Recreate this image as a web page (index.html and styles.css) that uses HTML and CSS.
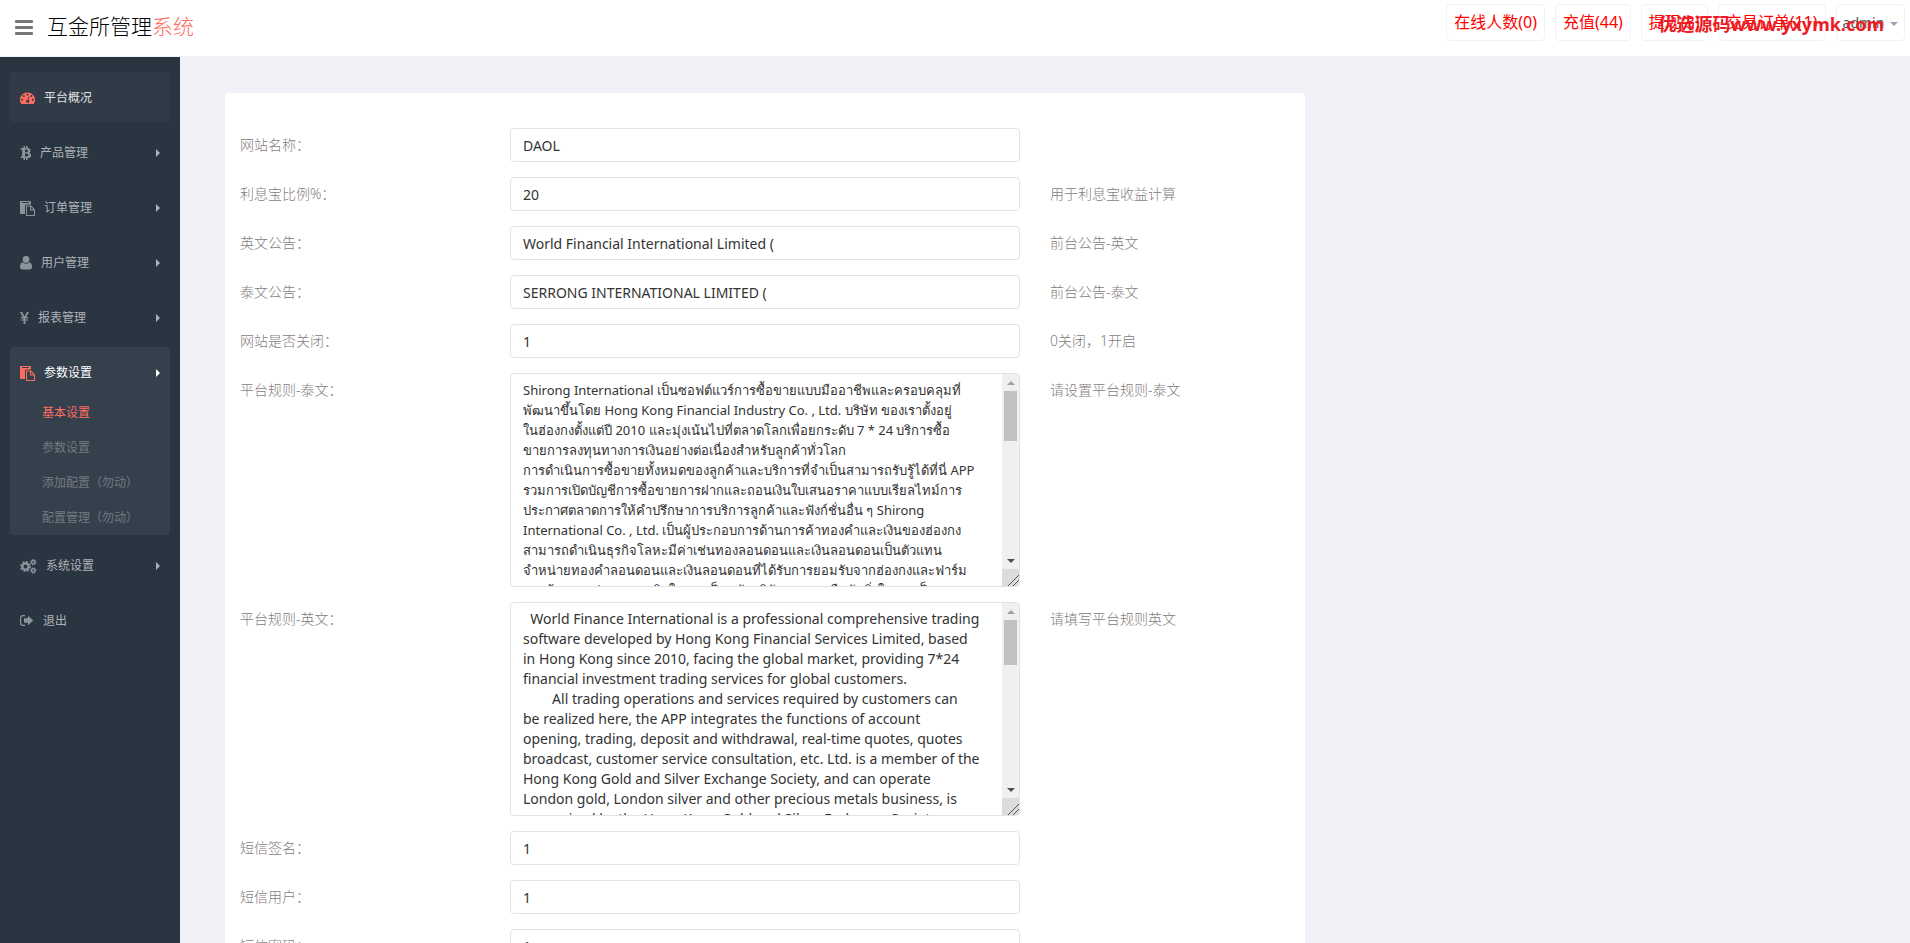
FILE: index.html
```html
<!DOCTYPE html>
<html lang="zh-CN">
<head>
<meta charset="UTF-8">
<meta name="viewport" content="width=device-width, initial-scale=1.0">
<title>互金所管理系统</title>
<link rel="stylesheet" href="styles.css">
</head>
<body>
<header class="header">
    <button class="toggle" type="button" aria-label="菜单"><span></span><span></span><span></span></button>
    <a class="logo" href="#">互金所管理<span>系统</span></a>
    <div class="top-nav">
        <a class="notice" href="#">在线人数(0)</a>
        <a class="notice" href="#">充值(44)</a>
        <a class="notice" href="#">提现(3)</a>
        <a class="notice" href="#">交易订单(11)</a>
        <a class="user" href="#">admin <b class="caret"></b></a>
        <span class="watermark">优选源码www.yxymk.com</span>
    </div>
</header>
<div class="container">
    <nav class="sidebar">
        <a class="item current" href="#">
            <svg width="15" height="14" viewBox="0 0 16 14"><path fill-rule="evenodd" d="M8 1a8 8 0 0 0-6.800 12.200q.2.300.6.300h12.400q.4 0 .6-.3A8 8 0 0 0 8 1zM8 2.100a1.100 1.100 0 1 1 0 2.200 1.100 1.100 0 0 1 0-2.200zM4 3.800a1.100 1.100 0 1 1 0 2.200 1.100 1.100 0 0 1 0-2.200zM12 3.800a1.100 1.100 0 1 1 0 2.200 1.100 1.100 0 0 1 0-2.200zM2.300 7.800a1.100 1.100 0 1 1 0 2.200 1.100 1.100 0 0 1 0-2.200zM13.700 7.800a1.100 1.100 0 1 1 0 2.200 1.100 1.100 0 0 1 0-2.200zM9.200 5.200l.8.200-.9 3.600a1.700 1.700 0 1 1-.8-.2z"/></svg>
            <span>平台概况</span>
        </a>
        <a class="item" href="#">
            <svg width="11" height="14" viewBox="0 0 10 14"><path fill-rule="evenodd" d="M3 0h1.500v2h1V0H7v2.100c2 .2 3 1.100 3 2.600 0 1-.5 1.700-1.400 2.100 1.300.4 2 1.200 2 2.500 0 1.800-1.200 2.700-3.600 2.800V14H5.500v-1.900h-1V14H3v-1.900H0l.3-1.600h.9q.4 0 .4-.4V4q0-.5-.7-.5H0V2h3zM4.500 3.500v2.700c2 .1 2.900-.3 2.900-1.300s-.9-1.500-2.900-1.400zM4.500 7.600v3c2.300.1 3.400-.4 3.400-1.500S6.800 7.500 4.500 7.600z"/></svg>
            <span>产品管理</span><i class="arrow"></i>
        </a>
        <a class="item" href="#">
            <svg width="15" height="15" viewBox="0 0 15 15"><path fill-rule="evenodd" d="M1 0h9q1 0 1 1v2.500H6.500Q5 3.500 5 5v8H1q-1 0-1-1V1Q0 0 1 0zM2 1v1h7V1z"/><path fill-rule="evenodd" d="M6 5q0-.5.5-.5H11L15 8.500v6q0 .5-.5.500h-8Q6 15 6 14.500zM7 5.500V14h7V9.500h-4v-4zM11 6v2.500h2.500z"/></svg>
            <span>订单管理</span><i class="arrow"></i>
        </a>
        <a class="item" href="#">
            <svg width="12" height="14" viewBox="0 0 12 14"><circle cx="6" cy="3.500" r="3.400"/><path d="M2.800 6.200Q0 6.500 0 11.200 0 13.500 2.300 13.500h7.400q2.300 0 2.300-2.300 0-4.700-2.800-5Q7.800 7.700 6 7.700T2.800 6.200z"/></svg>
            <span>用户管理</span><i class="arrow"></i>
        </a>
        <a class="item" href="#">
            <svg width="9" height="14" viewBox="0 0 9 14"><path d="M0 1h2.200l2.300 4.600L6.800 1H9L6.300 6h1.900v1.200H5.500v1.200h2.700v1.200H5.500V13h-2V9.600H.8V8.400h2.700V7.200H.8V6h1.900z"/></svg>
            <span>报表管理</span><i class="arrow"></i>
        </a>
        <div class="group">
            <a class="item active" href="#">
                <svg width="15" height="15" viewBox="0 0 15 15"><path fill-rule="evenodd" d="M1 0h9q1 0 1 1v2.500H6.500Q5 3.500 5 5v8H1q-1 0-1-1V1Q0 0 1 0zM2 1v1h7V1z"/><path fill-rule="evenodd" d="M6 5q0-.5.5-.5H11L15 8.500v6q0 .5-.5.500h-8Q6 15 6 14.500zM7 5.500V14h7V9.500h-4v-4zM11 6v2.500h2.500z"/></svg>
                <span>参数设置</span><i class="arrow"></i>
            </a>
            <div class="subs">
                <a class="on" href="#">基本设置</a>
                <a href="#">参数设置</a>
                <a href="#">添加配置（勿动）</a>
                <a href="#">配置管理（勿动）</a>
            </div>
        </div>
        <a class="item" href="#">
            <svg class="gears" width="17" height="15" viewBox="0 0 17 15"><circle cx="5.500" cy="7.500" r="3.200" stroke-width="2.400"/><circle cx="5.500" cy="7.500" r="4.800" stroke-width="1.400" stroke-dasharray="1.900 1.870"/><circle cx="13.300" cy="3.200" r="1.700" stroke-width="1.500"/><circle cx="13.300" cy="3.200" r="2.700" stroke-width="1" stroke-dasharray="1.200 .920"/><circle cx="13.300" cy="11.500" r="1.700" stroke-width="1.500"/><circle cx="13.300" cy="11.500" r="2.700" stroke-width="1" stroke-dasharray="1.200 .920"/></svg>
            <span>系统设置</span><i class="arrow"></i>
        </a>
        <a class="item" href="#">
            <svg width="14" height="12" viewBox="0 0 14 12"><path d="M5 0v1.200H3Q1.200 1.200 1.200 3v5q0 1.800 1.800 1.800h2V11H3Q0 11 0 8V3Q0 0 3 0zM8 .8l5.300 4.700L8 10.200V7.800H4V3.200h4z"/></svg>
            <span>退出</span>
        </a>
    </nav>
    <main class="main">
        <form class="panel">
            <div class="row">
                <label for="webname">网站名称：</label>
                <div class="field"><input type="text" id="webname" value="DAOL"></div>
                <span class="hint"></span>
            </div>
            <div class="row">
                <label for="ratio">利息宝比例%：</label>
                <div class="field"><input type="text" id="ratio" value="20"></div>
                <span class="hint">用于利息宝收益计算</span>
            </div>
            <div class="row">
                <label for="notice_en">英文公告：</label>
                <div class="field"><input type="text" id="notice_en" value="World Financial International Limited ("></div>
                <span class="hint">前台公告-英文</span>
            </div>
            <div class="row">
                <label for="notice_th">泰文公告：</label>
                <div class="field"><input type="text" id="notice_th" value="SERRONG INTERNATIONAL LIMITED ("></div>
                <span class="hint">前台公告-泰文</span>
            </div>
            <div class="row">
                <label for="isopen">网站是否关闭：</label>
                <div class="field"><input type="text" id="isopen" value="1"></div>
                <span class="hint">0关闭，1开启</span>
            </div>
            <div class="row">
                <label for="rule_th">平台规则-泰文：</label>
                <div class="field">
                    <div class="area">
                        <textarea id="rule_th" class="thai" lang="th">
Shirong International เป็นซอฟต์แวร์การซื้อขายแบบมืออาชีพและครอบคลุมที่
พัฒนาขึ้นโดย Hong Kong Financial Industry Co. , Ltd. บริษัท ของเราตั้งอยู่
ในฮ่องกงตั้งแต่ปี 2010 และมุ่งเน้นไปที่ตลาดโลกเพื่อยกระดับ 7 * 24 บริการซื้อ
ขายการลงทุนทางการเงินอย่างต่อเนื่องสำหรับลูกค้าทั่วโลก
การดำเนินการซื้อขายทั้งหมดของลูกค้าและบริการที่จำเป็นสามารถรับรู้ได้ที่นี่ APP
รวมการเปิดบัญชีการซื้อขายการฝากและถอนเงินใบเสนอราคาแบบเรียลไทม์การ
ประกาศตลาดการให้คำปรึกษาการบริการลูกค้าและฟังก์ชั่นอื่น ๆ Shirong
International Co. , Ltd. เป็นผู้ประกอบการด้านการค้าทองคำและเงินของฮ่องกง
สามารถดำเนินธุรกิจโลหะมีค่าเช่นทองลอนดอนและเงินลอนดอนเป็นตัวแทน
จำหน่ายทองคำลอนดอนและเงินลอนดอนที่ได้รับการยอมรับจากฮ่องกงและฟาร์ม
และด้านการประกอบธุรกิจในการเป็นหลักบริษัทและการยืนยันสิ่งใดและเป็นทาง</textarea>
                        <div class="scroll"><i class="up"></i><i class="thumb"></i><i class="down"></i><i class="grip"></i></div>
                    </div>
                </div>
                <span class="hint">请设置平台规则-泰文</span>
            </div>
            <div class="row">
                <label for="rule_en">平台规则-英文：</label>
                <div class="field">
                    <div class="area">
                        <textarea id="rule_en">
  World Finance International is a professional comprehensive trading
software developed by Hong Kong Financial Services Limited, based
in Hong Kong since 2010, facing the global market, providing 7*24
financial investment trading services for global customers.
        All trading operations and services required by customers can
be realized here, the APP integrates the functions of account
opening, trading, deposit and withdrawal, real-time quotes, quotes
broadcast, customer service consultation, etc. Ltd. is a member of the
Hong Kong Gold and Silver Exchange Society, and can operate
London gold, London silver and other precious metals business, is
recognized by the Hong Kong Gold and Silver Exchange Society</textarea>
                        <div class="scroll"><i class="up"></i><i class="thumb short"></i><i class="down"></i><i class="grip"></i></div>
                    </div>
                </div>
                <span class="hint">请填写平台规则英文</span>
            </div>
            <div class="row">
                <label for="sms_sign">短信签名：</label>
                <div class="field"><input type="text" id="sms_sign" value="1"></div>
                <span class="hint"></span>
            </div>
            <div class="row">
                <label for="sms_user">短信用户：</label>
                <div class="field"><input type="text" id="sms_user" value="1"></div>
                <span class="hint"></span>
            </div>
            <div class="row">
                <label for="sms_pwd">短信密码：</label>
                <div class="field"><input type="text" id="sms_pwd" value="1"></div>
                <span class="hint"></span>
            </div>
        </form>
    </main>
</div>
</body>
</html>
```

FILE: styles.css
```css
* {
    box-sizing: border-box;
}
body {
    margin: 0;
    height: 100vh;
    overflow: hidden;
    display: flex;
    flex-direction: column;
    background: #f1f2f7;
    color: #797979;
    font-family: "Noto Sans", "Noto Sans CJK SC", sans-serif;
    font-size: 14px;
    line-height: 20px;
}
a {
    text-decoration: none;
}
.header {
    flex: none;
    display: flex;
    align-items: flex-start;
    height: 56px;
    padding: 0 5px 0 15px;
    background: #fff;
}
.toggle {
    display: flex;
    flex-direction: column;
    gap: 3px;
    width: 18px;
    margin: 20px 14px 0 0;
    padding: 0;
    border: none;
    background: none;
    cursor: pointer;
}
.toggle span {
    height: 3px;
    border-radius: 1px;
    background: #777;
}
.logo {
    margin-top: 11px;
    font-size: 21px;
    line-height: 30px;
    font-weight: 300;
    color: #000;
}
.logo span {
    color: #ff6c60;
}
.top-nav {
    position: relative;
    display: flex;
    gap: 10px;
    margin: 4px 0 0 auto;
}
.top-nav a {
    height: 37px;
    padding: 0 6px;
    border: 1px solid #f1f2f7;
    border-radius: 4px;
    line-height: 34px;
}
.top-nav .notice {
    padding: 0 7px;
    color: #f00;
    font-size: 16px;
}
.top-nav .user {
    color: #555;
    font-size: 14px;
    line-height: 36px;
}
.caret {
    display: inline-block;
    margin-left: 2px;
    border: 4px solid transparent;
    border-top-color: #a09fb5;
    border-bottom: none;
    vertical-align: middle;
}
.watermark {
    position: absolute;
    right: 21px;
    top: 10px;
    color: #ed1c24;
    font-size: 18px;
    font-weight: 700;
    white-space: nowrap;
}
.container {
    flex: 1;
    display: flex;
    min-height: 0;
}
.sidebar {
    flex: none;
    width: 180px;
    margin-top: 1px;
    padding: 15px 10px;
    background: #2a3542;
    font-size: 12px;
}
.item {
    display: flex;
    align-items: center;
    gap: 9px;
    height: 50px;
    margin-bottom: 5px;
    padding: 2px 10px 0;
    border-radius: 4px;
    color: #aeb2b7;
}
.item svg {
    flex: none;
    fill: #8c939b;
}
.item .gears {
    fill: none;
    stroke: #8c939b;
}
.item.current {
    background: #303b47;
    color: #e1e3e5;
}
.item.current svg,
.item.active svg {
    fill: #ff6c60;
}
.item.active {
    margin: 0;
    color: #fff;
}
.arrow {
    margin-left: auto;
    border: 4px solid transparent;
    border-left-color: currentColor;
    border-right: none;
}
.group {
    margin-bottom: 5px;
    border-radius: 4px;
    background: #35404d;
}
.subs {
    margin-top: -2px;
    padding-left: 32px;
}
.subs a {
    display: block;
    line-height: 35px;
    color: #74797f;
}
.subs .on {
    color: #ff6c60;
}
.main {
    flex: 1;
    display: grid;
    grid-template-columns: 2fr 1fr;
    gap: 20px;
    padding: 37px 45px 0;
    overflow: hidden;
}
.panel {
    padding-top: 35px;
    border-radius: 4px;
    background: #fff;
}
.row {
    display: grid;
    grid-template-columns: 1fr 2fr 1fr;
    margin-bottom: 15px;
    font-weight: 300;
}
.row label,
.row .hint {
    padding: 7px 15px;
    color: #847c7c;
}
.field {
    padding: 0 15px;
}
.field input,
.field textarea {
    display: block;
    width: 100%;
    height: 34px;
    padding: 6px 12px;
    border: 1px solid #e2e2e4;
    border-radius: 4px;
    background: #fff;
    color: #333;
    font: inherit;
    font-weight: 400;
}
.area {
    position: relative;
}
.field textarea {
    height: 214px;
    padding-right: 18px;
    resize: none;
    overflow: hidden;
    white-space: pre;
}
.field .thai {
    font-size: 13px;
}
/* scroll bar over the right edge of the textarea */
.scroll {
    position: absolute;
    top: 1px;
    right: 1px;
    bottom: 1px;
    display: flex;
    flex-direction: column;
    align-items: center;
    width: 17px;
    border-radius: 0 3px 3px 0;
    background: #f0f0f0;
    overflow: hidden;
}
.up,
.down {
    height: 17px;
    padding-top: 7px;
}
.up::before,
.down::before {
    content: "";
    display: block;
    border: 4px solid transparent;
}
.up::before {
    border-top: none;
    border-bottom-color: #a0a0a0;
}
.down {
    margin-top: auto;
}
.down::before {
    border-bottom: none;
    border-top-color: #505050;
}
.thumb {
    width: 13px;
    height: 50px;
    background: #c1c1c1;
}
.thumb.short {
    height: 45px;
}
.grip {
    width: 17px;
    height: 17px;
    background: linear-gradient(135deg, transparent 66%, #555 66%, #555 70%, transparent 70%, transparent 80%, #555 80%, #555 84%, transparent 84%) #dcdcdc;
}
```
